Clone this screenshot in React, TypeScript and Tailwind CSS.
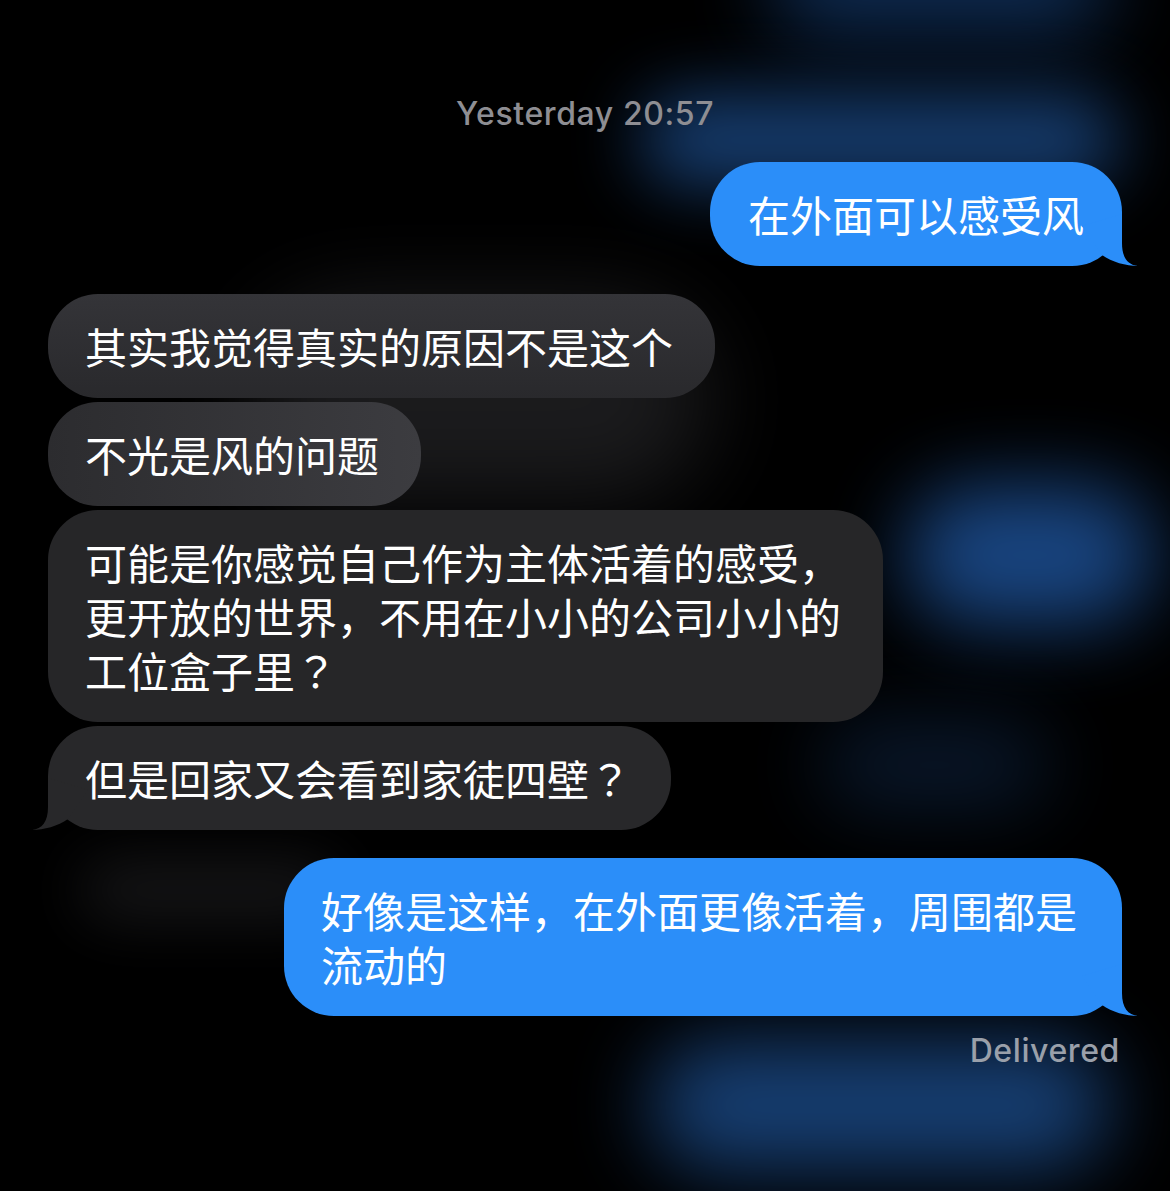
import React from "react";

const FONT = { fontFamily: '"Inter", "Noto Sans CJK SC", "Noto Sans", sans-serif' };
const CJK = { fontFamily: '"Noto Sans CJK SC", "Noto Sans", sans-serif' };
const JP = { fontFamily: '"Noto Sans CJK JP", "Noto Sans CJK SC", sans-serif' };

function TailRight({ color }: { color: string }) {
  return (
    <svg
      className="absolute bottom-0 right-[-16px]"
      width="60"
      height="60"
      viewBox="-44 -60 60 60"
      aria-hidden
    >
      <path d="M0,-52 L0,-23 C0,-8 6,-1 16,0 C4,0 -10,-4 -20,-11 L-40,-40 Z" fill={color} />
    </svg>
  );
}

function TailLeft({ color }: { color: string }) {
  return (
    <svg
      className="absolute bottom-0 left-[-16px]"
      width="60"
      height="60"
      viewBox="-16 -60 60 60"
      aria-hidden
    >
      <path d="M0,-52 L0,-23 C0,-8 -6,-1 -16,0 C-4,0 10,-4 20,-11 L40,-40 Z" fill={color} />
    </svg>
  );
}

const bubbleText = "text-[42px] leading-[54px] text-white whitespace-nowrap";

export default function App() {
  return (
    <div className="relative w-full min-h-[1191px] bg-black overflow-hidden" style={FONT}>
      {/* background glows */}
      <div className="pointer-events-none absolute left-[770px] top-[-60px] w-[340px] h-[90px] rounded-full bg-[#1f5fb5] opacity-50 blur-[40px]" />
      <div className="pointer-events-none absolute left-[640px] top-[95px] w-[480px] h-[90px] rounded-full bg-[#2a72d0] opacity-55 blur-[35px]" />
      <div className="pointer-events-none absolute left-[905px] top-[485px] w-[250px] h-[140px] rounded-full bg-[#2a74d8] opacity-60 blur-[40px]" />
      <div className="pointer-events-none absolute left-[820px] top-[720px] w-[230px] h-[90px] rounded-full bg-[#1f4f90] opacity-30 blur-[40px]" />
      <div className="pointer-events-none absolute left-[650px] top-[1040px] w-[460px] h-[130px] rounded-full bg-[#2a72d0] opacity-55 blur-[40px]" />
      <div className="pointer-events-none absolute left-[250px] top-[300px] w-[460px] h-[200px] rounded-full bg-[#5a5a60] opacity-30 blur-[45px]" />
      <div className="pointer-events-none absolute left-[80px] top-[860px] w-[260px] h-[60px] rounded-full bg-[#4a4a50] opacity-30 blur-[30px]" />

      <div className="relative z-10 flex flex-col px-[48px] pt-[94px]">
        <div className="text-center text-[32px] leading-[40px] font-medium text-[#8e8e93] tracking-[0.6px]">
          Yesterday 20:57
        </div>

        {/* outgoing 1 */}
        <div className="mt-[28px] flex justify-end">
          <div className="relative rounded-[50px] bg-[#2b8ef9] px-[38px] py-[25px]">
            <div className={bubbleText} style={CJK}>在外面可以感受风</div>
            <TailRight color="#2b8ef9" />
          </div>
        </div>

        {/* incoming group */}
        <div className="mt-[28px] flex flex-col items-start gap-[4px]">
          <div className="relative rounded-[50px] bg-linear-to-b from-[#343438] to-[#29292c] pl-[37px] pr-[42px] py-[25px]">
            <div className={bubbleText} style={CJK}>其实我觉得真实的原因不是这个</div>
          </div>
          <div className="relative rounded-[50px] bg-linear-to-r from-[#2c2c2f] to-[#3c3c40] pl-[37px] pr-[42px] py-[25px]">
            <div className={bubbleText} style={CJK}>不光是风的问题</div>
          </div>
          <div className="relative rounded-[50px] bg-[#262628] pl-[37px] pr-[42px] py-[25px]">
            <div className={bubbleText} style={CJK}>
              可能是你感觉自己作为主体活着的感受，
              <br />
              更开放的世界，不用在小小的公司小小的
              <br />
              工位盒子里<span style={JP}>？</span>
            </div>
          </div>
          <div className="relative rounded-[50px] bg-[#28282a] pl-[37px] pr-[40px] py-[25px]">
            <div className={bubbleText} style={CJK}>
              但是回家又会看到家徒四壁<span style={JP}>？</span>
            </div>
            <TailLeft color="#28282a" />
          </div>
        </div>

        {/* outgoing 2 */}
        <div className="mt-[28px] flex justify-end">
          <div className="relative rounded-[50px] bg-[#2b8ef9] pl-[37px] pr-[45px] py-[25px]">
            <div className={bubbleText} style={CJK}>
              好像是这样，在外面更像活着，周围都是
              <br />
              流动的
            </div>
            <TailRight color="#2b8ef9" />
          </div>
        </div>

        <div className="mt-[15px] text-right pr-[2px] text-[32px] leading-[40px] font-medium tracking-[0.6px] text-[#9aa0aa]">
          Delivered
        </div>
      </div>
    </div>
  );
}
